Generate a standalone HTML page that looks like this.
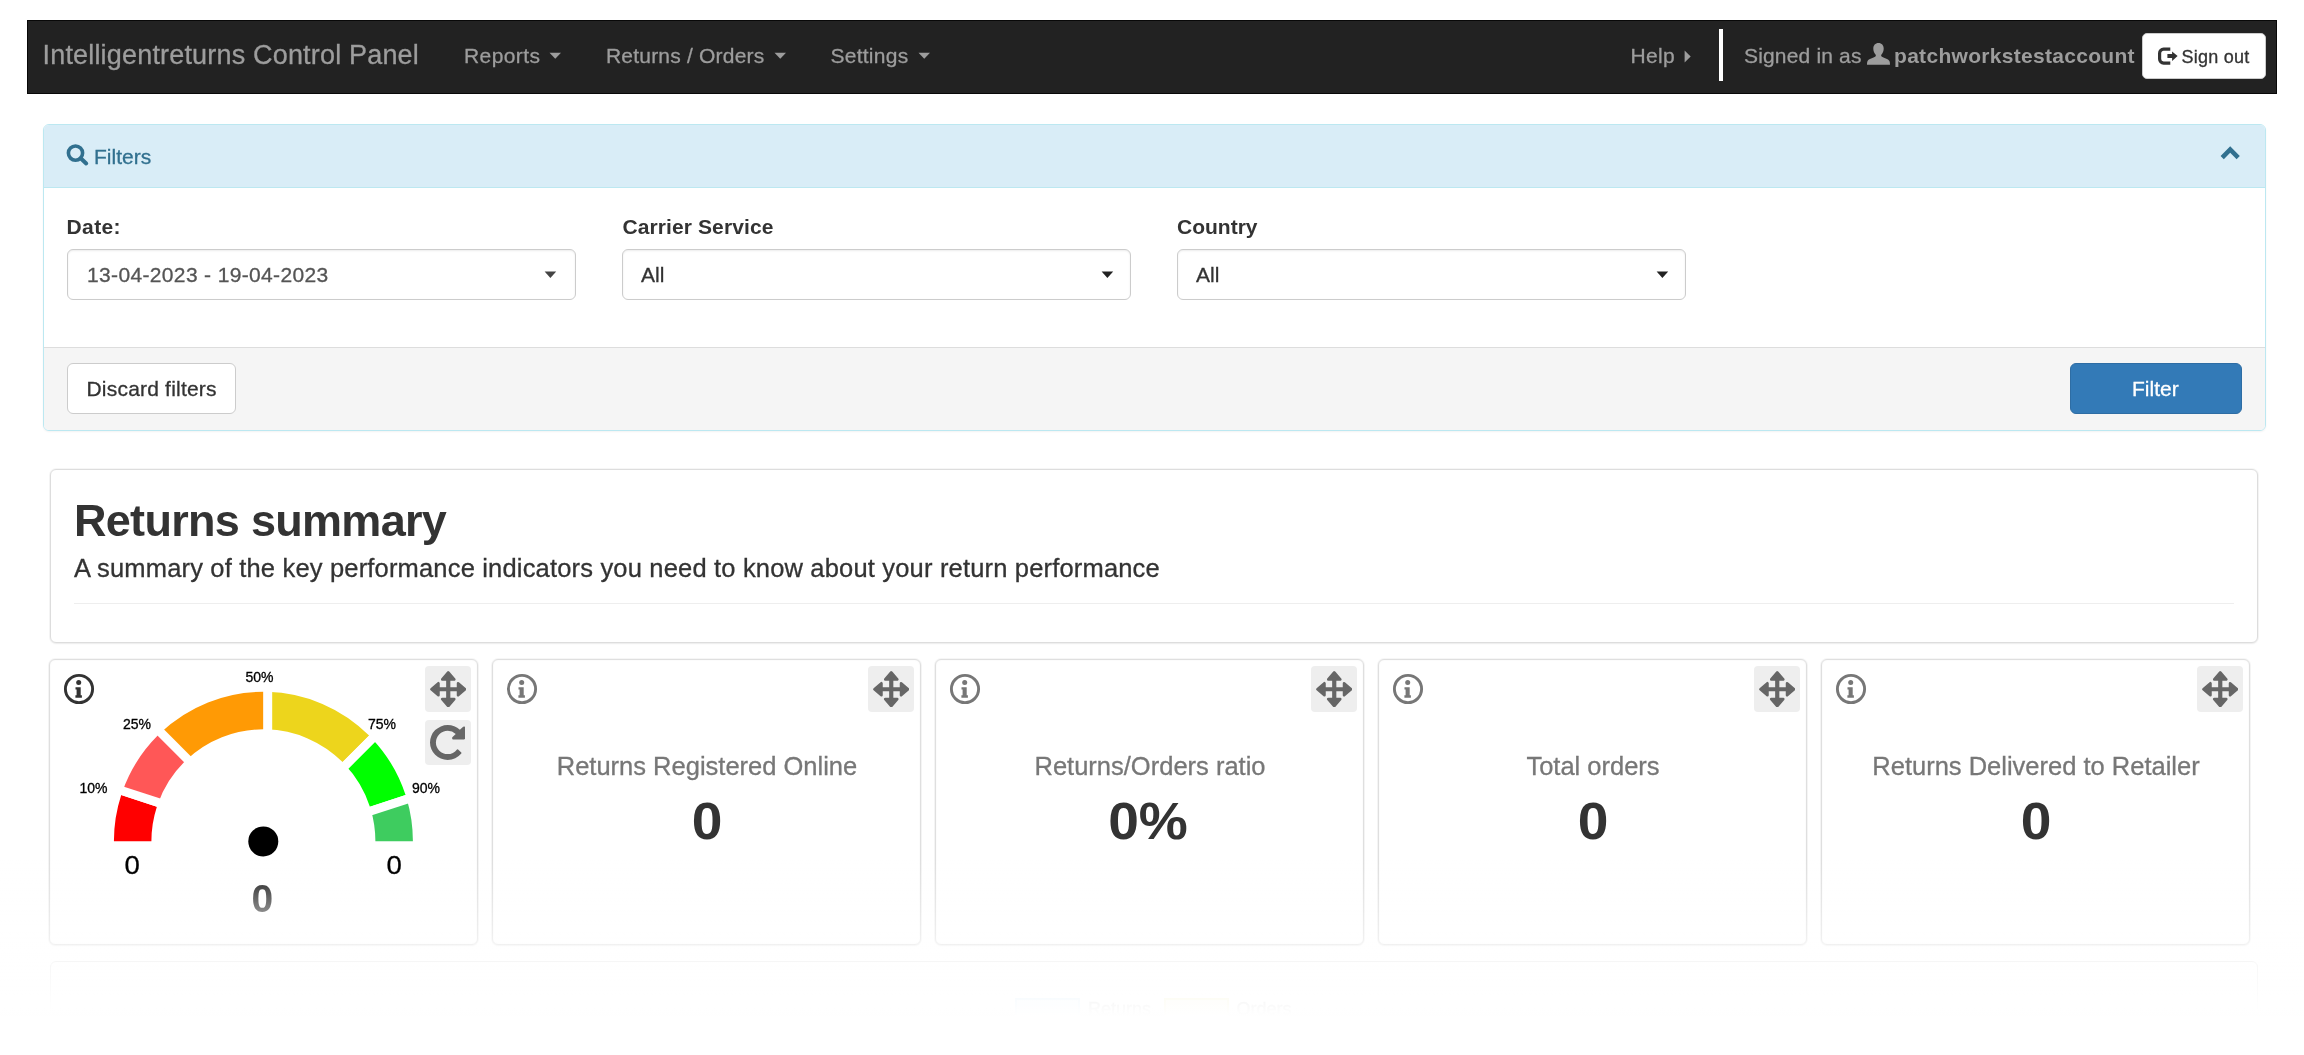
<!DOCTYPE html>
<html lang="en">
<head>
<meta charset="utf-8">
<title>Intelligentreturns Control Panel</title>
<style>
html,body{margin:0;padding:0;background:#fff;}
body{width:2304px;height:1055px;overflow:hidden;position:relative;font-family:"Liberation Sans",Arial,Helvetica,sans-serif;color:#333;}
#wrap{position:absolute;left:0;top:0;width:2304px;height:1055px;will-change:transform;}
.abs{position:absolute;box-sizing:border-box;}
.t{position:absolute;white-space:nowrap;line-height:1;-webkit-text-stroke:.3px;}
b,.b{font-weight:700;}
.b,.lbl,.cval{-webkit-text-stroke:0 !important;}
/* navbar */
#nav{left:27px;top:20px;width:2250px;height:74px;background:#222;border:1px solid #080808;}
.nv{color:#9d9d9d;font-size:21px;}
/* filter panel */
#fpanel{left:43px;top:124px;width:2223px;height:307px;border:1px solid #bce8f1;border-radius:6px;background:#fff;box-shadow:0 1px 2px rgba(0,0,0,.05);overflow:hidden;}
#fhead{left:0;top:0;width:100%;height:63px;background:#d9edf7;border-bottom:1px solid #bce8f1;}
#ffoot{left:0;top:222px;width:100%;height:84px;background:#f5f5f5;border-top:1px solid #ddd;}
.sel{height:51px;width:509px;top:249px;border:1px solid #ccc;border-radius:6px;background:#fff;box-shadow:inset 0 1px 2px rgba(0,0,0,.075);}
.lbl{font-size:21px;font-weight:700;color:#333;}
.selt{font-size:21px;color:#555;}
.caret{position:absolute;width:0;height:0;border-left:6px solid transparent;border-right:6px solid transparent;border-top:7px solid #333;}
.btn{border:1px solid #ccc;border-radius:6px;background:#fff;}
/* summary */
#sum{left:50px;top:469px;width:2208px;height:174px;border:1px solid #ddd;border-radius:6px;background:#fff;box-shadow:0 0 0 1px rgba(200,200,200,.16),0 1px 2px rgba(0,0,0,.05);}
.card{top:659px;width:429px;height:286px;border:1px solid #dfdfdf;border-radius:6px;background:#fff;box-shadow:0 0 0 1px rgba(200,200,200,.16),inset 0 0 2px rgba(0,0,0,.05),0 1px 2px rgba(0,0,0,.05);}
.mv{width:45.500px;height:45.500px;background:#eee;border-radius:4px;}
.gl{font-size:14px;color:#000;}
.ctitle{font-size:25.5px;color:#777;text-align:center;}
.cval{transform:scaleX(1.05);font-size:52.5px;font-weight:700;color:#333;text-align:center;}
</style>
</head>
<body>
<div id="wrap">

<!-- NAVBAR -->
<div id="nav" class="abs"></div>
<span class="t" id="brand" style="left:42.5px;top:42px;font-size:27px;color:#9d9d9d;letter-spacing:.18px;">Intelligentreturns Control Panel</span>
<span class="t nv" id="n1" style="left:464px;top:45px;letter-spacing:.4px;">Reports</span>
<span class="t nv" id="n2" style="left:606px;top:45px;letter-spacing:.2px;">Returns / Orders</span>
<span class="t nv" id="n3" style="left:830.5px;top:45px;letter-spacing:.25px;">Settings</span>
<span class="t nv" id="n4" style="left:1630.5px;top:45px;letter-spacing:.35px;">Help</span>
<span class="t nv" id="n5" style="left:1744px;top:45px;letter-spacing:.17px;">Signed in as</span>
<span class="t nv b" id="n6" style="left:1894px;top:45px;letter-spacing:.3px;">patchworkstestaccount</span>


<!-- nav carets -->
<svg class="abs" style="left:549px;top:52px;" width="13" height="8" viewBox="0 0 13 8"><path d="M0.5 0.8h11.5l-5.75 6z" fill="#9d9d9d"/></svg>
<svg class="abs" style="left:773.5px;top:52px;" width="13" height="8" viewBox="0 0 13 8"><path d="M0.5 0.8h11.5l-5.75 6z" fill="#9d9d9d"/></svg>
<svg class="abs" style="left:918px;top:52px;" width="13" height="8" viewBox="0 0 13 8"><path d="M0.5 0.8h11.5l-5.75 6z" fill="#9d9d9d"/></svg>
<svg class="abs" style="left:1684px;top:50px;" width="8" height="14" viewBox="0 0 8 14"><path d="M0.6 0.6v12l6.1-6z" fill="#9d9d9d"/></svg>
<div class="abs" style="left:1719px;top:29px;width:3.6px;height:51.5px;background:#fff;"></div>
<!-- user glyph -->
<svg class="abs" id="iuser" style="left:1867px;top:43px;" width="23" height="22" viewBox="0 0 23 22"><path fill="#9d9d9d" d="M11.5 0C8.3 0 6.3 2.4 6.3 5.6c0 2.3.8 4.6 2.2 6 .5.6.5 1.500-.1 1.900C6.500 14.700 1.600 15.900.6 18c-.5 1-.6 2.600-.6 3.800h23c0-1.200-.1-2.800-.6-3.800-1-2.100-5.900-3.300-7.800-4.500-.6-.4-.6-1.300-.1-1.900 1.400-1.400 2.200-3.700 2.200-6C16.700 2.400 14.700 0 11.500 0z"/></svg>
<!-- sign out -->
<div class="abs" id="bso" style="left:2141.5px;top:33px;width:124.5px;height:46px;background:#fff;border:1px solid #ccc;border-radius:5px;"></div>
<svg class="abs" id="iso" style="left:2156px;top:46px;" width="24" height="21" viewBox="0 0 24 21"><path d="M14.300 3.200H7.600a4 4 0 0 0-4 4v5.900a4 4 0 0 0 4 4h6.700" fill="none" stroke="#333" stroke-width="3.200"/><path fill="#333" d="M11.400 8h4.700V5.400l5.500 4.700-5.500 4.800v-3h-4.700z"/></svg>
<span class="t" id="tso" style="left:2181.5px;top:47.500px;font-size:18px;color:#333;letter-spacing:.25px;">Sign out</span>

<!-- FILTERS -->
<div id="fpanel" class="abs">
  <div id="fhead" class="abs"></div>
  <div id="ffoot" class="abs"></div>
</div>
<span class="t" id="ftitle" style="left:94px;top:146px;font-size:21px;color:#31708f;">Filters</span>

<span class="t lbl" id="l1" style="left:66.5px;top:216px;letter-spacing:.4px;">Date:</span>
<span class="t lbl" id="l2" style="left:622.5px;top:216px;letter-spacing:.1px;">Carrier Service</span>
<span class="t lbl" id="l3" style="left:1177px;top:216px;">Country</span>
<div class="abs sel" style="left:67px;"></div>
<div class="abs sel" style="left:622px;"></div>
<div class="abs sel" style="left:1177px;"></div>
<span class="t selt" id="s1" style="left:87px;top:264.300px;letter-spacing:.35px;">13-04-2023 - 19-04-2023</span>
<span class="t selt" id="s2" style="left:641px;top:264.300px;color:#333;">All</span>
<span class="t selt" id="s3" style="left:1196px;top:264.300px;color:#333;">All</span>

<div class="abs btn" id="bdisc" style="left:67px;top:363px;width:169px;height:51px;"></div>
<span class="t" id="tdisc" style="left:86.5px;top:378px;font-size:21px;color:#333;letter-spacing:.2px;">Discard filters</span>
<div class="abs" id="bfil" style="left:2070px;top:363px;width:172px;height:51px;background:#337ab7;border:1px solid #2e6da4;border-radius:6px;"></div>
<span class="t" id="tfil" style="left:2132px;top:378px;font-size:21px;color:#fff;">Filter</span>


<!-- search icon -->
<svg class="abs" id="isearch" style="left:64px;top:141px;" width="28" height="28" viewBox="0 0 28 28"><circle cx="11.500" cy="12.100" r="7.100" fill="none" stroke="#31708f" stroke-width="3.600"/><path d="M16.700 17.300l5.500 5.200" stroke="#31708f" stroke-width="4" stroke-linecap="round" fill="none"/></svg>
<!-- chevron up -->
<svg class="abs" id="ichev" style="left:2218px;top:144px;" width="24" height="18" viewBox="0 0 24 18"><path fill="#31708f" d="M12.200 2.300l9.600 9.600-3.200 3.300-6.400-6.400-6.400 6.400-3.200-3.300z"/></svg>
<!-- select carets -->
<svg class="abs" style="left:543.5px;top:271.4px;" width="13" height="8" viewBox="0 0 13 8"><path d="M0.6 0.600h11.600l-5.800 6.400z" fill="#444"/></svg>
<svg class="abs" style="left:1100.500px;top:271.4px;" width="13" height="8" viewBox="0 0 13 8"><path d="M0.6 0.600h11.600l-5.800 6.400z" fill="#222"/></svg>
<svg class="abs" style="left:1655.500px;top:271.4px;" width="13" height="8" viewBox="0 0 13 8"><path d="M0.6 0.600h11.600l-5.800 6.400z" fill="#222"/></svg>

<!-- SUMMARY -->
<div id="sum" class="abs"></div>
<span class="t b" id="h1" style="left:74px;top:498px;font-size:45px;color:#333;letter-spacing:-.7px;">Returns summary</span>
<span class="t" id="lead" style="left:74px;top:556px;font-size:25.5px;color:#333;letter-spacing:.175px;">A summary of the key performance indicators you need to know about your return performance</span>
<div class="abs" style="left:74px;top:603px;width:2160px;height:1px;background:#eee;"></div>

<!-- CARDS -->
<div class="abs card" id="c1" style="left:49px;"></div>
<div class="abs card" id="c2" style="left:492px;"></div>
<div class="abs card" id="c3" style="left:935px;"></div>
<div class="abs card" id="c4" style="left:1378px;"></div>
<div class="abs card" id="c5" style="left:1821px;"></div>

<!-- CARD ICONS -->
<svg width="0" height="0" style="position:absolute"><defs>
<symbol id="s-arrows" viewBox="-18.250 -18.250 36.500 36.500"><path stroke="#666" stroke-width="2.600" stroke-linejoin="round" d="M0-16.800L6-9.800H-6ZM16.800 0L9.800 6V-6ZM0 16.800L-6 9.800H6ZM-16.800 0L-9.800-6V6Z"/><path d="M-2.100-11.500h4.200v23h-4.200zM-11.500-2.100h23v4.200h-23z"/></symbol>
<symbol id="s-info" viewBox="0 0 32 32"><circle cx="16" cy="16" r="13.600" fill="none" stroke="currentColor" stroke-width="2.900"/><circle cx="15.700" cy="9.600" r="2.500"/><path d="M12.500 14.200h5.200v8h1.200v2.600h-6.500v-2.600h1.200v-5.800h-1.100z"/></symbol>
</defs></svg>

<svg class="abs" style="left:63.05px;top:673.05px;color:#333;fill:#333;" width="32" height="32"><use href="#s-info"/></svg>
<div class="abs mv" style="left:425.2px;top:666.3px;"></div>
<svg class="abs" style="left:429.75px;top:670.85px;fill:#666;" width="36.500" height="36.500"><use href="#s-arrows"/></svg>
<svg class="abs" style="left:506.35px;top:673.05px;color:#777;fill:#777;" width="32" height="32"><use href="#s-info"/></svg>
<div class="abs mv" style="left:868.2px;top:666.3px;"></div>
<svg class="abs" style="left:872.75px;top:670.85px;fill:#666;" width="36.500" height="36.500"><use href="#s-arrows"/></svg>
<svg class="abs" style="left:949.35px;top:673.05px;color:#777;fill:#777;" width="32" height="32"><use href="#s-info"/></svg>
<div class="abs mv" style="left:1311.2px;top:666.3px;"></div>
<svg class="abs" style="left:1315.75px;top:670.85px;fill:#666;" width="36.500" height="36.500"><use href="#s-arrows"/></svg>
<svg class="abs" style="left:1392.35px;top:673.05px;color:#777;fill:#777;" width="32" height="32"><use href="#s-info"/></svg>
<div class="abs mv" style="left:1754.2px;top:666.3px;"></div>
<svg class="abs" style="left:1758.75px;top:670.85px;fill:#666;" width="36.500" height="36.500"><use href="#s-arrows"/></svg>
<svg class="abs" style="left:1835.35px;top:673.05px;color:#777;fill:#777;" width="32" height="32"><use href="#s-info"/></svg>
<div class="abs mv" style="left:2197.2px;top:666.3px;"></div>
<svg class="abs" style="left:2201.75px;top:670.85px;fill:#666;" width="36.500" height="36.500"><use href="#s-arrows"/></svg>
<div class="abs mv" style="left:425.2px;top:719.5px;"></div>
<svg class="abs" style="left:430.05px;top:724.8px;fill:#666;" width="35.400" height="34.900" viewBox="128 128 1536 1536" preserveAspectRatio="none"><path d="M1664 256v448q0 26-19 45t-45 19h-448q-42 0-59-40-17-39 14-69l138-138q-148-137-349-137-104 0-198.500 40.500t-163.500 109.500-109.500 163.500-40.500 198.500 40.500 198.500 109.500 163.500 163.500 109.500 198.500 40.500q119 0 225-52t179-147q7-10 23-12 15 0 25 9l137 138q9 8 9.500 20.500t-7.500 22.500q-109 132-264 204.500t-327 72.500q-156 0-298-61t-245-164-164-245-61-298 61-298 164-245 245-164 298-61q147 0 284.500 55.500t244.500 156.500l130-129q29-31 70-14 39 17 39 59z"/></svg>
<!-- GAUGE -->
<svg class="abs" id="gauge" style="left:49px;top:659px;" width="430" height="286" viewBox="49 659 430 286">
<path d="M113.90 841.30A149.5 149.5 0 0 1 121.22 795.10L156.88 806.69A112.0 112.0 0 0 0 151.40 841.30Z" fill="#ff0000"/>
<path d="M122.48 791.40A149.5 149.5 0 0 1 157.69 735.59L184.20 762.10A112.0 112.0 0 0 0 157.82 803.91Z" fill="#ff5757"/>
<path d="M160.49 732.86A149.5 149.5 0 0 1 263.40 691.80L263.40 729.30A112.0 112.0 0 0 0 186.30 760.06Z" fill="#ff9a05"/>
<path d="M267.31 691.85A149.5 149.5 0 0 1 369.11 735.59L342.60 762.10A112.0 112.0 0 0 0 266.33 729.34Z" fill="#edd51c"/>
<path d="M371.84 738.39A149.5 149.5 0 0 1 405.58 795.10L369.92 806.69A112.0 112.0 0 0 0 344.64 764.20Z" fill="#00ff00"/>
<path d="M406.74 798.84A149.5 149.5 0 0 1 412.90 841.30L375.40 841.30A112.0 112.0 0 0 0 370.79 809.49Z" fill="#3ecc5f"/>
<path d="M162.05 803.74L118.77 789.68" stroke="#fff" stroke-width="8.8" fill="none"/>
<path d="M190.14 761.82L157.97 729.65" stroke="#fff" stroke-width="8.8" fill="none"/>
<path d="M267.80 733.30L267.80 687.80" stroke="#fff" stroke-width="8.8" fill="none"/>
<path d="M342.88 768.04L375.05 735.87" stroke="#fff" stroke-width="8.8" fill="none"/>
<path d="M367.47 812.11L410.75 798.05" stroke="#fff" stroke-width="8.8" fill="none"/>
<circle cx="263.3" cy="841.4" r="15" fill="#000"/>
</svg>
<span class="t gl" style="left:245.5px;top:670px;">50%</span>
<span class="t gl" style="left:123px;top:717px;">25%</span>
<span class="t gl" style="left:368px;top:717px;">75%</span>
<span class="t gl" style="left:79.5px;top:781px;">10%</span>
<span class="t gl" style="left:412px;top:781px;">90%</span>




<span class="t ctitle" style="left:492px;width:430px;top:753.700px;">Returns Registered Online</span>
<span class="t cval" style="left:492px;width:430px;top:795px;">0</span>
<span class="t ctitle" style="left:935px;width:430px;top:753.700px;">Returns/Orders ratio</span>
<span class="t cval" style="left:933px;width:430px;top:795px;">0%</span>
<span class="t ctitle" style="left:1378px;width:430px;top:753.700px;">Total orders</span>
<span class="t cval" style="left:1378px;width:430px;top:795px;">0</span>
<span class="t ctitle" style="left:1821px;width:430px;top:753.700px;">Returns Delivered to Retailer</span>
<span class="t cval" style="left:1821px;width:430px;top:795px;">0</span>


<!-- NEXT PANEL (faded) -->
<div class="abs" id="p2" style="left:50px;top:961px;width:2208px;height:140px;border:1px solid #ddd;border-radius:6px;background:#fff;"></div>
<div class="abs" style="left:1015px;top:998px;width:65px;height:21px;background:#d7ecfb;border:2px solid #9ad0f5;"></div>
<span class="t" style="left:1088px;top:1000px;font-size:18px;color:#777;">Returns</span>
<div class="abs" style="left:1164px;top:998px;width:65px;height:21px;background:#f6f3c4;border:2px solid #e3da6a;"></div>
<span class="t" style="left:1236.500px;top:1000px;font-size:18px;color:#777;">Orders</span>
<div class="abs" id="fade" style="left:0;top:860px;width:2304px;height:195px;background:linear-gradient(to bottom,rgba(255,255,255,0) 0px,rgba(255,255,255,.25) 40px,rgba(255,255,255,.45) 70px,rgba(255,255,255,.58) 85px,rgba(255,255,255,.75) 102px,rgba(255,255,255,.94) 140px,rgba(255,255,255,1) 156px);"></div>
<span class="t" id="g0l" style="left:124.700px;top:852px;font-size:26px;transform:scaleX(1.06);color:#000;">0</span>
<span class="t" id="g0r" style="left:386.500px;top:852px;font-size:26px;transform:scaleX(1.06);color:#000;">0</span>
<span class="t b" id="g0b" style="left:251.500px;top:879.400px;font-size:39px;background:linear-gradient(#464646 18%,#8e8e8e 88%);-webkit-background-clip:text;background-clip:text;color:transparent;">0</span>
</div>
</body>
</html>
